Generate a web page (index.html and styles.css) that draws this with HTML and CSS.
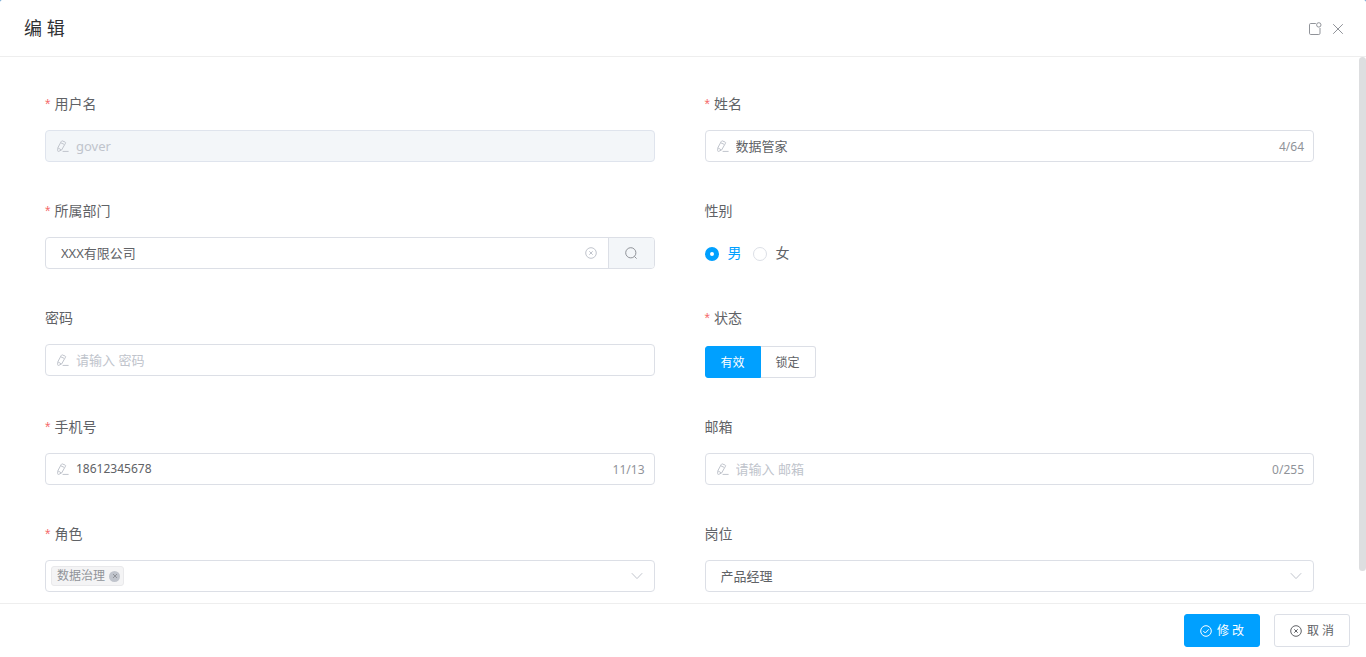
FILE: index.html
```html
<!DOCTYPE html>
<html lang="zh-CN">
<head>
<meta charset="utf-8">
<meta name="viewport" content="width=device-width, initial-scale=1">
<title>编辑</title>
<link rel="stylesheet" href="styles.css">
</head>
<body>
<svg width="0" height="0" class="sprite" aria-hidden="true">
  <symbol id="pen" viewBox="0 0 12 12"><path d="M5.3.9 8.2 2.1Q8.9 2.5 8.5 3.2L4.6 10 1.6 11.4Q.6 11.6.6 10.4L.9 7.6 4.3 1.4Q4.7.7 5.3.9ZM3.8 2.8 7 4.3M1 7.8 4.2 9.9M5.6 11.4H11.6"/></symbol>
  <symbol id="close-circle" viewBox="0 0 12 12"><circle cx="6" cy="6" r="5.3"/><path d="M4.3 4.3 7.7 7.7M7.7 4.3 4.3 7.7"/></symbol>
  <symbol id="chevron" viewBox="0 0 12 12"><path d="M.8 3.2 6 8.6 11.2 3.2"/></symbol>
</svg>
<form class="dialog">
  <header class="header">
    <h1 class="title">编 辑</h1>
    <div class="tools">
      <button type="button" class="tool" aria-label="全屏"><svg class="icon" width="14" height="14" viewBox="0 0 14 14"><path d="M7.8 1.5H2.7Q1.5 1.5 1.5 2.7V11.3Q1.5 12.5 2.7 12.5H10.8Q12 12.5 12 11.3V6"/><circle cx="10.8" cy="2.9" r="2.2"/></svg></button>
      <button type="button" class="tool" aria-label="关闭"><svg class="icon" width="14" height="14" viewBox="0 0 14 14"><path d="M2.2 2.2 11.8 11.8M11.8 2.2 2.2 11.8"/></svg></button>
    </div>
  </header>
  <main class="body">
    <div class="grid">
      <div class="field">
        <label class="label required" for="user">用户名</label>
        <div class="control disabled"><svg class="icon" width="12" height="12"><use href="#pen"/></svg><input class="input" id="user" value="gover" disabled></div>
      </div>
      <div class="field">
        <label class="label required" for="name">姓名</label>
        <div class="control"><svg class="icon" width="12" height="12"><use href="#pen"/></svg><input class="input" id="name" value="数据管家"><span class="count">4/64</span></div>
      </div>
      <div class="field">
        <label class="label required" for="dept">所属部门</label>
        <div class="control joined"><input class="input" id="dept" value="XXX有限公司"><button type="button" class="clear" aria-label="清空"><svg class="icon" width="12" height="12"><use href="#close-circle"/></svg></button><button type="button" class="search" aria-label="搜索"><svg class="icon" width="12" height="12" viewBox="0 0 12 12"><circle cx="5.8" cy="5.8" r="5.1"/><path d="M9.4 9.4 11.6 11.6"/></svg></button></div>
      </div>
      <div class="field">
        <span class="label" id="sex-label">性别</span>
        <div class="radios" role="radiogroup" aria-labelledby="sex-label">
          <label class="radio"><input type="radio" name="sex" checked><span>男</span></label>
          <label class="radio"><input type="radio" name="sex"><span>女</span></label>
        </div>
      </div>
      <div class="field">
        <label class="label" for="password">密码</label>
        <div class="control"><svg class="icon" width="12" height="12"><use href="#pen"/></svg><input class="input" type="password" id="password" placeholder="请输入 密码"></div>
      </div>
      <div class="field">
        <span class="label required" id="state-label">状态</span>
        <div class="segments" role="radiogroup" aria-labelledby="state-label">
          <label class="segment"><input type="radio" name="state" checked>有效</label>
          <label class="segment"><input type="radio" name="state">锁定</label>
        </div>
      </div>
      <div class="field">
        <label class="label required" for="phone">手机号</label>
        <div class="control"><svg class="icon" width="12" height="12"><use href="#pen"/></svg><input class="input number" type="tel" id="phone" value="18612345678"><span class="count">11/13</span></div>
      </div>
      <div class="field">
        <label class="label" for="mail">邮箱</label>
        <div class="control"><svg class="icon" width="12" height="12"><use href="#pen"/></svg><input class="input" id="mail" placeholder="请输入 邮箱"><span class="count">0/255</span></div>
      </div>
      <div class="field">
        <label class="label required" for="role">角色</label>
        <div class="control tags"><span class="tag">数据治理<button type="button" class="tag-close" aria-label="移除"><svg class="icon" width="6" height="6" viewBox="0 0 6 6"><path d="M1 1 5 5M5 1 1 5"/></svg></button></span><input class="input" id="role"><svg class="icon arrow" width="12" height="12"><use href="#chevron"/></svg></div>
      </div>
      <div class="field">
        <label class="label" for="post">岗位</label>
        <div class="control picker"><select class="input" id="post"><option>产品经理</option></select><svg class="icon arrow" width="12" height="12"><use href="#chevron"/></svg></div>
      </div>
    </div>
    <div class="scrollbar"></div>
  </main>
  <footer class="footer">
    <button type="submit" class="button primary"><svg class="icon" width="12" height="12" viewBox="0 0 12 12"><circle cx="6" cy="6" r="5.3"/><path d="M3.2 5.9 5.3 8 8.8 4.3"/></svg>修 改</button>
    <button type="button" class="button"><svg class="icon" width="12" height="12"><use href="#close-circle"/></svg>取 消</button>
  </footer>
</form>
</body>
</html>
```
FILE: styles.css
```css
* { box-sizing: border-box; }
body {
  margin: 0;
  background: #4a90c8;
  color: #606266;
  font: 13px/20px "Noto Sans", "Noto Sans CJK SC", sans-serif;
}
button, input, select { font: inherit; color: inherit; margin: 0; }
button { padding: 0; border: 0; background: none; cursor: pointer; }
.sprite { position: absolute; }
.icon { flex: none; display: block; fill: none; stroke: currentColor; stroke-width: 1; }
.dialog { display: flex; flex-direction: column; height: 100vh; background: #fff; border-radius: 2px 2px 0 0; overflow: hidden; }

.header { display: flex; flex: none; align-items: center; justify-content: space-between; height: 57px; padding: 0 21px 0 24px; border-bottom: 1px solid #eee; }
.title { margin: 0; font-size: 18px; line-height: 24px; font-weight: 400; color: #303133; }
.tools { display: flex; gap: 9px; padding-top: 2px; color: #909399; }

.body { display: flex; flex: 1; min-height: 0; align-items: flex-start; overflow: hidden; }
.grid { flex: 1; display: grid; grid-template-columns: 1fr 1fr; gap: 33px 50px; padding: 31px 45px 34px; }
.scrollbar { flex: none; width: 7px; height: 514px; border-radius: 4px; background: #dddee0; }
.field { min-width: 0; }
.label { display: block; margin-bottom: 10px; font-size: 14px; line-height: 32px; }
.required::before { content: "*"; margin-right: 4px; color: #f56c6c; font-family: "Liberation Sans", sans-serif; }

.control { display: flex; align-items: center; height: 32px; padding: 0 9px 0 11px; border: 1px solid #dcdfe6; border-radius: 4px; background: #fff; color: #c0c4cc; }
.input { flex: 1; min-width: 0; height: 30px; padding: 0 0 1px 7px; border: 0; outline: 0; background: transparent; color: #606266; }
.input::placeholder { color: #c0c4cc; opacity: 1; }
.number { font-size: 12px; }
.disabled { background: #f3f6f9; border-color: #dfe4ed; }
.disabled .input { color: #c0c4cc; }
.count { padding-top: 1px; font-size: 12px; color: #909399; }
.joined { padding: 0 0 0 8px; }
.clear { margin-right: 11px; }
.search { display: grid; place-items: center; width: 46px; height: 30px; border-left: 1px solid #dcdfe6; border-radius: 0 3px 3px 0; background: #f3f6f9; color: #909399; }

.radios { display: flex; align-items: center; gap: 11px; height: 32px; font-size: 14px; }
.radio { display: flex; align-items: center; gap: 9px; }
.radio input { appearance: none; width: 14px; height: 14px; margin-top: 2px; border: 1px solid #dcdfe6; border-radius: 50%; background: #fff; }
.radio input:checked { border: 5px solid #00a0ff; }
.radio input:checked + span { color: #00a0ff; }

.segments { display: flex; padding-top: 2px; font-size: 12px; }
.segment { height: 32px; padding: 0 15px; border: 1px solid #dcdfe6; border-left: 0; line-height: 32px; }
.segment:first-child { border-left: 1px solid #dcdfe6; border-radius: 3px 0 0 3px; }
.segment:last-child { border-radius: 0 3px 3px 0; }
.segment:has(:checked) { border-color: #00a0ff; background: #00a0ff; color: #fff; }
.segment input { position: absolute; opacity: 0; pointer-events: none; }

.tags { padding-left: 5px; }
.tag { display: flex; align-items: center; gap: 4px; height: 20px; padding: 0 3px 0 5px; border: 1px solid #e9e9eb; border-radius: 3px; background: #f4f4f5; color: #909399; font-size: 12px; }
.tag-close { display: grid; place-items: center; width: 11px; height: 11px; border-radius: 50%; background: #c0c4cc; color: #909399; }
.arrow { margin-right: 2px; }
.picker { padding-left: 8px; }
.picker select { appearance: none; }

.footer { display: flex; flex: none; align-items: center; justify-content: flex-end; gap: 14px; height: 54px; padding: 0 16px; border-top: 1px solid #eee; }
.button { display: flex; align-items: center; justify-content: center; gap: 5px; width: 76px; height: 33px; border: 1px solid #dcdfe6; border-radius: 3px; background: #fff; font-size: 12px; }
.primary { border-color: #00a0ff; background: #00a0ff; color: #fff; }
```
